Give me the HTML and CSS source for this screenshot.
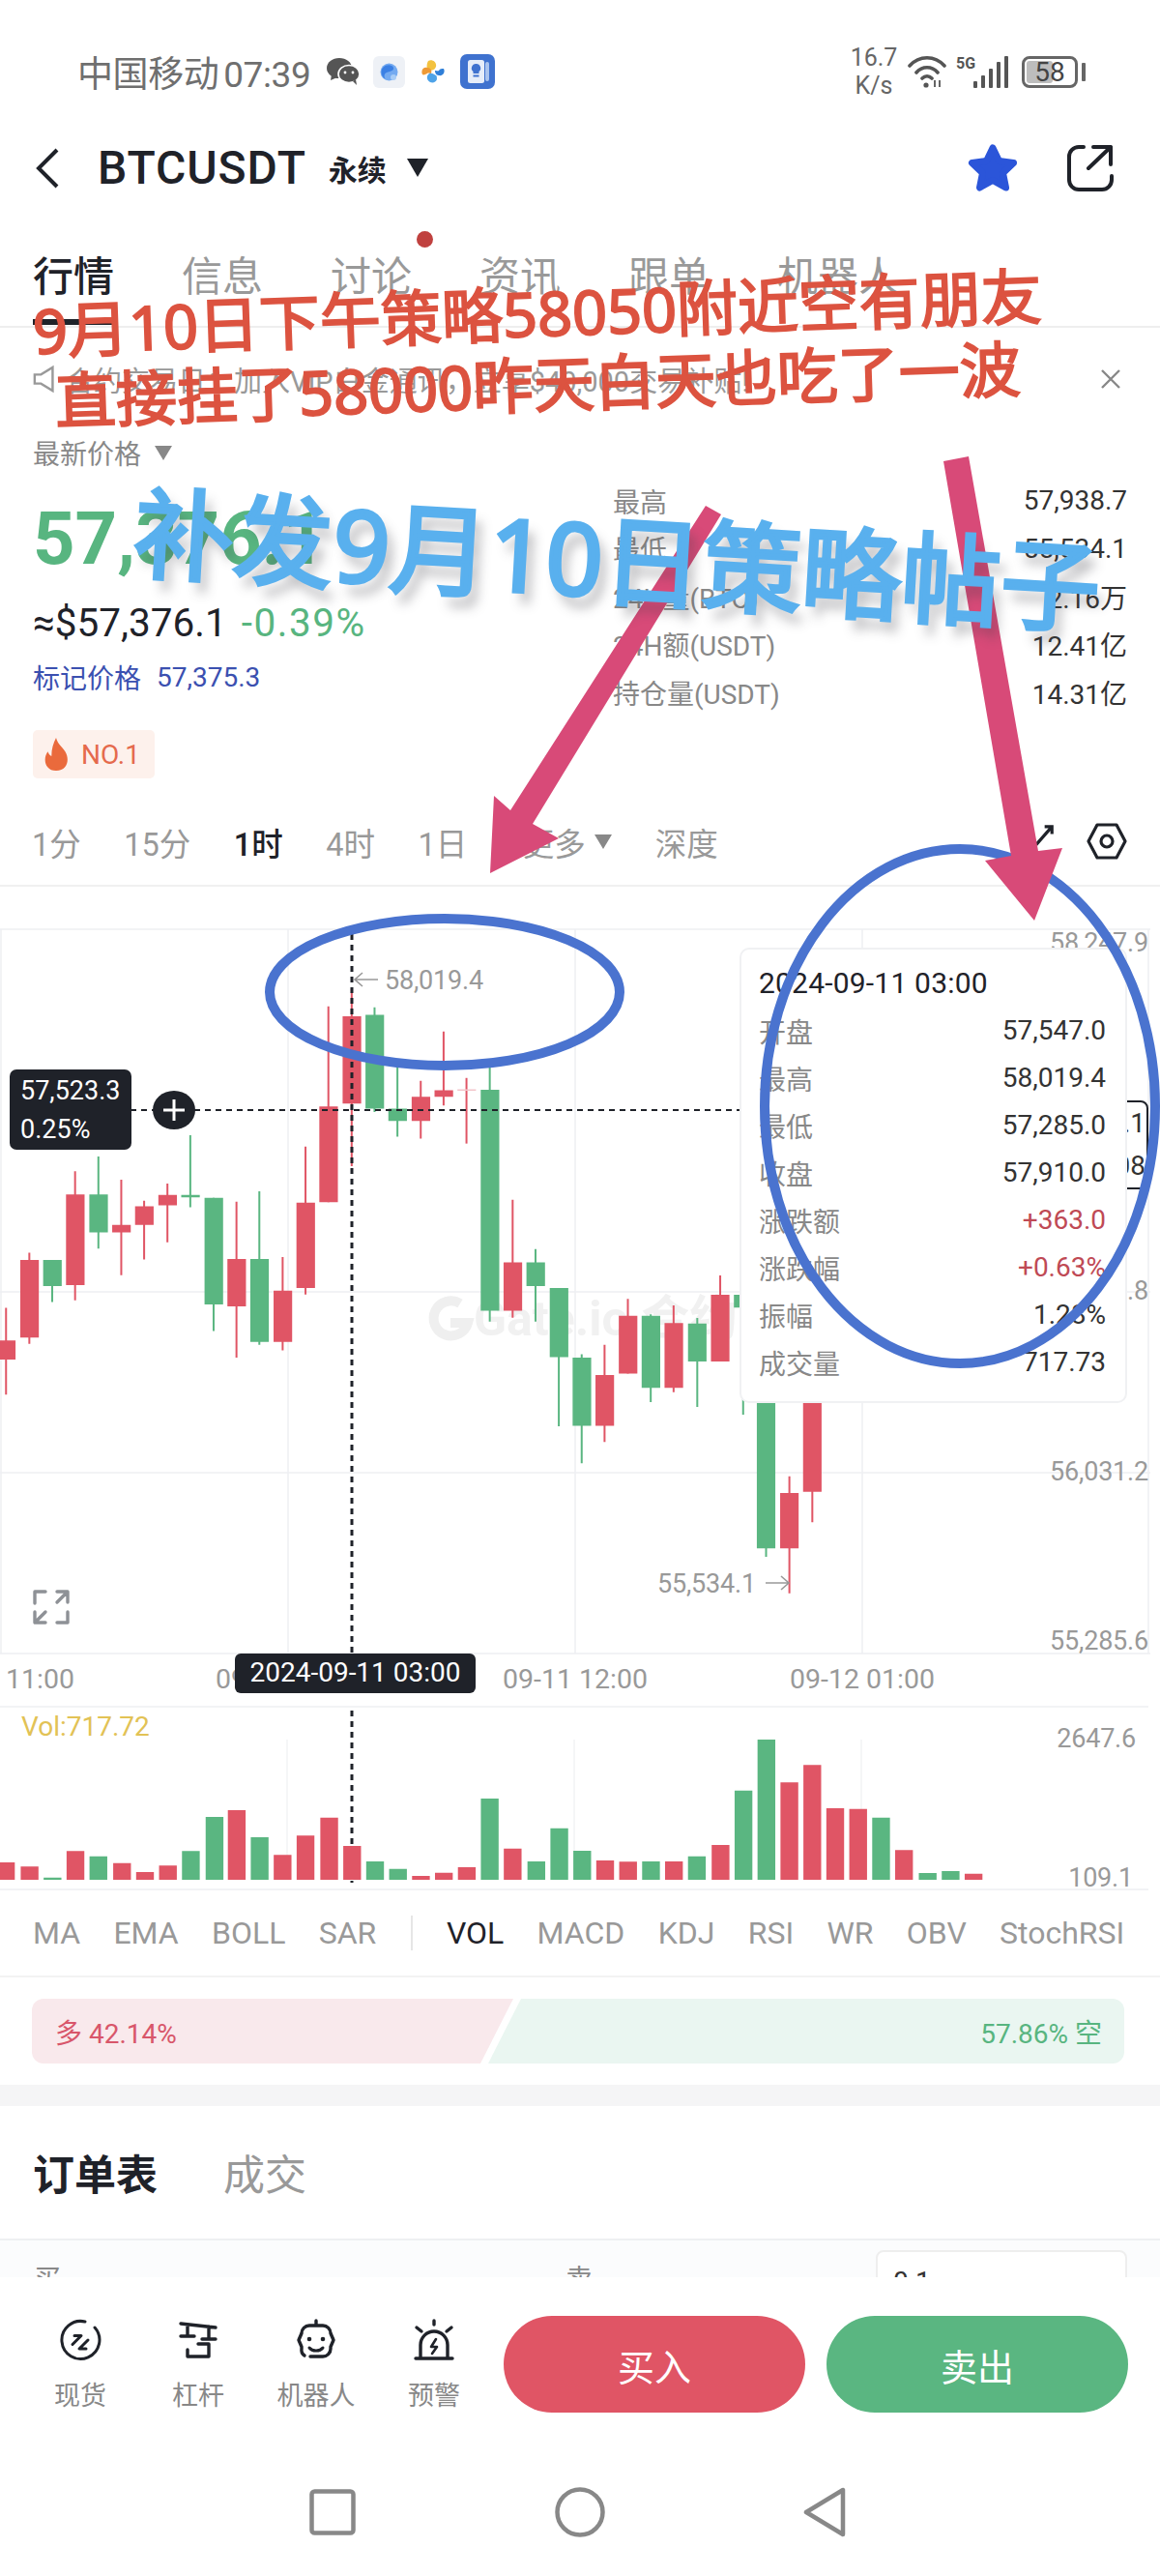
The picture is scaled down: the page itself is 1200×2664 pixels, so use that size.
FILE: index.html
```html
<!DOCTYPE html>
<html lang="zh">
<head>
<meta charset="utf-8">
<title>BTCUSDT</title>
<link rel="stylesheet" href="styles.css">
</head>
<body>
<div class="page">
  <header class="status">
    <div class="status-left">
      <span class="carrier">中国移动 07:39</span>
      <svg class="st-wechat" viewBox="0 0 34 28"><ellipse cx="13" cy="10.5" rx="13" ry="10.5" fill="#555"/><path d="M5 17l-1 6 7-3z" fill="#555"/><ellipse cx="23" cy="16.5" rx="11" ry="9" fill="#555" stroke="#fff" stroke-width="1.6"/><path d="M27 24l4 4-1-6z" fill="#555"/><circle cx="19" cy="15" r="1.4" fill="#fff"/><circle cx="27" cy="15" r="1.4" fill="#fff"/></svg>
      <svg class="st-app" viewBox="0 0 33 33"><rect width="33" height="33" rx="6" fill="#eef1f6"/><circle cx="16.500" cy="16.500" r="9" fill="#74aaf0"/><path d="M10 12c4-4 10-3 11 0s-4 4-7 5-3 5-1 7c-4-2-6-8-3-12z" fill="#3b80e4"/><circle cx="21" cy="22" r="3" fill="#a9cdf6"/></svg>
      <svg class="st-app2" viewBox="0 0 24 24"><path d="M7 1c4-2 9 1 8 6-1 3-4 4-7 4C5 11 5 4 7 1z" fill="#f3c23f"/><path d="M1 15c-2-4 1-8 5-7 4 0 5 3 4 6-1 0-3-1-4 0-2 1-4 2-5 1z" fill="#ee9a35"/><path d="M9 23c-4-2-4-7-1-9 3-1 5 1 7 2 1 0 1 3 1 4-1 3-4 4-7 3z" fill="#4ea3e8"/><path d="M23 9c2 4-1 8-5 7-3 0-4-3-4-5 2 0 3 1 4 0 1-2 3-2 5-2z" fill="#2f7fd8"/></svg>
      <svg class="st-app3" viewBox="0 0 36 36"><rect width="36" height="36" rx="7" fill="#3f72cf"/><rect x="26" y="8" width="4" height="20" rx="2" fill="#a9c3ee"/><rect x="8" y="6" width="17" height="24" rx="2.500" fill="#e6edf9"/><path d="M16.500 10a4.500 4.500 0 0 1 3 8v2h-6v-2a4.500 4.500 0 0 1 3-8z" fill="#3f72cf"/><rect x="13.500" y="21.500" width="6" height="2" fill="#3f72cf"/></svg>
    </div>
    <div class="status-right">
      <div class="speed"><span>16.7</span><span>K/s</span></div>
      <svg class="st-wifi" viewBox="0 0 40 34" fill="none" stroke="#555" stroke-width="3.600" stroke-linecap="round"><path d="M2 11C12 0 28 0 38 11M9 18c6-7 16-7 22 0M15 24c3-3 7-3 10 0"/><circle cx="19" cy="31" r="2.600" fill="#555" stroke="none"/><path d="M28 26v7M33 26v7" stroke-width="1.800" stroke-linecap="butt"/></svg>
      <span class="five-g">5G</span>
      <svg class="st-signal" viewBox="0 0 36 33" fill="#555"><rect x="0" y="26" width="4" height="7" rx="1"/><rect x="8" y="20" width="4" height="13" rx="1"/><rect x="16" y="13" width="4" height="20" rx="1"/><rect x="24" y="6" width="4" height="27" rx="1"/><rect x="32" y="0" width="4" height="33" rx="1"/></svg>
      <div class="battery"><div class="batt-fill"></div><span class="batt-num">58</span></div>
      <div class="batt-cap"></div>
    </div>
  </header>

  <div class="titlebar">
    <svg class="ic-back" viewBox="0 0 26 42" fill="none" stroke="#1f2229" stroke-width="4"><path d="M23 2L4 21l19 19"/></svg>
    <span class="symbol">BTCUSDT</span>
    <span class="perp">永续</span>
    <span class="caret"></span>
    <div class="title-actions">
      <svg class="ic-star" viewBox="0 0 52 51"><path d="M26 5l6.500 13.500 15 2-11 10.500 3 15L26 38.500 12.500 46l3-15L4.500 20.500l15-2z" fill="#2b55d9" stroke="#2b55d9" stroke-width="7" stroke-linejoin="round"/></svg>
      <svg class="ic-share" viewBox="0 0 48 48" fill="none" stroke="#1f2229" stroke-width="4" stroke-linecap="round" stroke-linejoin="round"><path d="M17 2H12A10 10 0 0 0 2 12V36a10 10 0 0 0 10 10H36a10 10 0 0 0 10-10V32M22 24L45 2M27 2H45V20"/></svg>
    </div>
  </div>

  <nav class="tabs">
    <span class="tab tab-on">行情</span>
    <span class="tab">信息</span>
    <span class="tab">讨论</span>
    <span class="tab">资讯</span>
    <span class="tab">跟单</span>
    <span class="tab">机器人</span>
  </nav>

  <div class="notice">
    <svg class="ic-speaker" viewBox="0 0 28 32" fill="none" stroke="#999" stroke-width="2.600"><path d="M2 11h7l13-8v26l-13-8H2z"/></svg>
    <span class="notice-text">合约交易日：加入VIP白金通讯，立享$40,000交易补贴!</span>
    <svg class="ic-close" viewBox="0 0 22 22" stroke="#888" stroke-width="2.400"><path d="M2 2l18 18M20 2L2 20"/></svg>
  </div>

  <section class="market">
    <div class="market-left">
      <div class="latest"><span>最新价格</span><span class="caret caret-sm"></span></div>
      <div class="price">57,376.1</div>
      <div class="usd"><span>≈$57,376.1</span><span class="usd-pct">-0.39%</span></div>
      <div class="mark"><span>标记价格</span><span>57,375.3</span></div>
      <div class="badge">
        <svg class="ic-flame" viewBox="0 0 28 36"><path d="M14 0c2 7 6 9 10 15 5 8 3 21-10 21C2 36-1 23 5 15c1 3 2 4 4 5 0-8 2-14 5-20z" fill="#ea6a3c"/></svg>
        <span>NO.1</span>
      </div>
    </div>
    <dl class="stats">
      <div class="stat"><dt>最高</dt><dd>57,938.7</dd></div>
      <div class="stat"><dt>最低</dt><dd>55,534.1</dd></div>
      <div class="stat"><dt>24H量(BTC)</dt><dd>2.16万</dd></div>
      <div class="stat"><dt>24H额(USDT)</dt><dd>12.41亿</dd></div>
      <div class="stat"><dt>持仓量(USDT)</dt><dd>14.31亿</dd></div>
    </dl>
  </section>

  <div class="intervals">
    <span>1分</span><span>15分</span><span class="on">1时</span><span>4时</span><span>1日</span>
    <span class="more">更多</span><span class="caret caret-sm more-caret"></span>
    <span>深度</span>
    <svg class="ic-draw" viewBox="0 0 36 40" fill="none" stroke="#1f2229" stroke-width="3.400"><path d="M4 36L32 4M24 4h8v8"/></svg>
    <svg class="ic-hex" viewBox="0 0 42 38" fill="none" stroke="#1f2229" stroke-width="3.200"><path d="M11 2h20l9 17-9 17H11L2 19z" stroke-linejoin="round"/><circle cx="21" cy="19" r="6"/></svg>
  </div>

  <section class="chart">
    <svg class="chart-svg" viewBox="0 916 1200 1038">
      <g class="grid">
        <path d="M0 960H1190M0 1335H1190M0 1522H1190M0 1709H1190"/>
        <path d="M1 960V1709M298 960V1709M595 960V1709M892 960V1709M1188 960V1709"/>
        <path d="M0 1764H1188M0 1953H1188"/>
        <path class="grid-faint" d="M297 1798V1943M594 1798V1943M891 1798V1943"/>
      </g>
      <g class="wm">
        <path class="wm-logo" d="M476 1347a18 18 0 1 0 8 20h-18" />
        <text class="wm-text" x="490" y="1380">Gate.io 合约</text>
      </g>
      <g transform="translate(0,950) scale(.4464,.5102)">
        <path class="wick-r" d="M14 787V963M68 675V860M174 510V772M281 527V721M334 570V689M388 535V654M548 572V888M655 684V873M708 460V760M761 176V573M815 140V500M975 327V444M1028 227V377M1188 568V807M1401 862V1059M1455 769V920M1561 782V958"/>
        <path class="wick-l" d="M1081 321V454"/>
        <path class="wick-g" d="M121 690V775M228 480V667M441 437V583M495 564V834M601 551V862M868 178V390M921 300V440M1135 300V815M1241 668V815M1295 747V1027M1348 881V1102M1508 800V978"/>
        <path class="body-r" d="M-7 853h43V892h-43zM47 690h43V847h-43zM153 557h43V741h-43zM260 619h43V634h-43zM313 581h43V619h-43zM367 558h43V579h-43zM527 688h43V784h-43zM634 752h43V856h-43zM687 574h43V747h-43zM740 379h43V573h-43zM794 196h43V373h-43zM954 359h43V408h-43zM1007 346h43V359h-43zM1167 695h43V793h-43zM1380 923h43V1026h-43zM1434 803h43V920h-43zM1540 818h43V949h-43z"/>
        <path class="body-l" d="M1060 344h43V347h-43z"/>
        <path class="body-g" d="M100 690h43V743h-43zM207 557h43V634h-43zM420 558h43V563h-43zM474 564h43V780h-43zM580 688h43V856h-43zM847 193h43V383h-43zM900 383h43V408h-43zM1114 345h43V793h-43zM1220 695h43V743h-43zM1274 747h43V887h-43zM1327 888h43V1026h-43zM1487 803h43V949h-43z"/>
      </g>
      <g transform="translate(600,850) scale(.3827,.5741)">
        <path class="wick-r" d="M379 815V970M566 1177V1388M628 1000V1260"/>
        <path class="wick-g" d="M317 892V1052M441 850V1066M503 1000V1322"/>
        <path class="body-r" d="M354 850h50V970h-50zM541 1207h50V1307h-50zM603 1000h50V1205h-50z"/>
        <path class="body-g" d="M292 902h50V970h-50zM416 850h50V873h-50zM478 1000h50V1307h-50z"/>
      </g>
      <g class="cross">
        <path d="M135 1147H765"/>
        <path class="cross-v" d="M364 965V1709M364 1768V1946"/>
      </g>
      <text class="axis hl" x="398" y="1022">58,019.4</text>
      <path class="hl-arrow" d="M391 1012H367M375 1005l-8 7 8 7"/>
      <text class="axis hl" x="680" y="1646">55,534.1</text>
      <path class="hl-arrow" d="M792 1636H816M808 1629l8 7-8 7"/>
      <g class="axis">
        <text class="xlab" x="6" y="1745">11:00</text>
        <text class="xlab" x="223" y="1745">09-11 00:00</text>
        <text class="xlab" x="520" y="1745">09-11 12:00</text>
        <text class="xlab" x="817" y="1745">09-12 01:00</text>
        <text class="end" x="1188" y="983">58,247.9</text>
        <text class="end" x="1188" y="1343">56,778.8</text>
        <text class="end" x="1188" y="1530">56,031.2</text>
        <text class="end" x="1188" y="1705">55,285.6</text>
        <text class="end" x="1175" y="1806">2647.6</text>
        <text class="end" x="1172" y="1950">109.1</text>
      </g>
      <text class="vol-label" x="22" y="1794">Vol:717.72</text>
      <g transform="translate(0,1750) scale(.7653,.33333)">
        <path class="body-r" d="M-4 525h24V579h-24zM28 538h24V579h-24zM90 490h24V579h-24zM153 527h24V579h-24zM184 555h24V579h-24zM215 535h24V579h-24zM308 363h24V579h-24zM370 502h24V579h-24zM401 442h24V579h-24zM433 386h24V579h-24zM464 474h24V579h-24zM557 567h24V579h-24zM588 557h24V579h-24zM619 540h24V579h-24zM681 482h24V579h-24zM806 519h24V579h-24zM837 523h24V579h-24zM899 522h24V579h-24zM962 471h24V579h-24zM1055 277h24V579h-24zM1086 223h24V579h-24zM1117 357h24V579h-24zM1148 359h24V579h-24zM1210 487h24V579h-24zM1304 560h24V579h-24z"/>
        <path class="body-g" d="M59 572h24V579h-24zM121 506h24V579h-24zM246 490h24V579h-24zM278 384h24V579h-24zM339 447h24V579h-24zM495 522h24V579h-24zM526 545h24V579h-24zM650 327h24V579h-24zM713 522h24V579h-24zM744 419h24V579h-24zM775 489h24V579h-24zM868 522h24V579h-24zM930 506h24V579h-24zM993 302h24V579h-24zM1024 144h24V579h-24zM1179 386h24V579h-24zM1242 558h24V579h-24zM1273 552h24V579h-24z"/>
      </g>
      <path class="expand" d="M36 1657v-12h11M59 1645h11v11M70 1645l-11 11M47 1677h-11v-11M36 1677l11-11M70 1666v11h-11"/>
    </svg>

    <div class="price-tag"><span>57,523.3</span><span>0.25%</span></div>
    <svg class="plus" viewBox="0 0 44 40"><ellipse cx="22" cy="20" rx="22" ry="20" fill="#1f2229"/><path d="M22 9v22M11 20h22" stroke="#fff" stroke-width="3"/></svg>
    <div class="time-tag">2024-09-11 03:00</div>
    <div class="last-tag"><span>57,910.1</span><span>00:20:08</span></div>

    <div class="tooltip">
      <div class="tip-row tip-date">2024-09-11 03:00</div>
      <div class="tip-row"><span>开盘</span><b>57,547.0</b></div>
      <div class="tip-row"><span>最高</span><b>58,019.4</b></div>
      <div class="tip-row"><span>最低</span><b>57,285.0</b></div>
      <div class="tip-row"><span>收盘</span><b>57,910.0</b></div>
      <div class="tip-row"><span>涨跌额</span><b class="red">+363.0</b></div>
      <div class="tip-row"><span>涨跌幅</span><b class="red">+0.63%</b></div>
      <div class="tip-row"><span>振幅</span><b>1.28%</b></div>
      <div class="tip-row"><span>成交量</span><b>717.73</b></div>
    </div>
  </section>

  <div class="indicators">
    <span>MA</span><span>EMA</span><span>BOLL</span><span>SAR</span>
    <i class="sep"></i>
    <span class="on">VOL</span><span>MACD</span><span>KDJ</span><span>RSI</span><span>WR</span><span>OBV</span><span>StochRSI</span>
  </div>

  <div class="ratio-wrap">
    <div class="ratio">
      <div class="ratio-long"><span>多 42.14%</span></div>
      <div class="ratio-short"><span>57.86% 空</span></div>
    </div>
  </div>

  <div class="band"></div>

  <div class="order-head">
    <span class="order-on">订单表</span>
    <span class="order-off">成交</span>
  </div>

  <div class="order-peek">
    <span class="peek-a">买</span>
    <span class="peek-b">卖</span>
    <div class="peek-input">0.1</div>
  </div>

  <div class="actionbar">
    <div class="tools">
      <div class="tool">
        <svg viewBox="0 0 44 44" fill="none" stroke="#1f2229" stroke-linecap="round" stroke-linejoin="round"><path d="M37 9A19.500 19.500 0 1 1 27 3" stroke-width="3"/><path d="M16 17.500h7L14 26.500M30 22l-9 9h7" stroke-width="3"/></svg>
        <span>现货</span>
      </div>
      <div class="tool">
        <svg viewBox="0 0 44 44" fill="none" stroke="#1f2229" stroke-width="3.400" stroke-linecap="round" stroke-linejoin="round"><path d="M4 5L40 9M11 6V18M4 18H18M33 8V20M26 21H40M22 26H33V39H11V32"/></svg>
        <span>杠杆</span>
      </div>
      <div class="tool">
        <svg viewBox="0 0 44 44" fill="none" stroke="#1f2229" stroke-width="3.400" stroke-linecap="round" stroke-linejoin="round"><path d="M22 2v5M15 7h14a8 8 0 0 1 8 8l3 7-3 7v2a8 8 0 0 1-8 8H16M10 38a7 7 0 0 1-3-7v-2l-3-7 3-7a8 8 0 0 1 8-8"/><path d="M15 30c3 4 11 4 14 0" stroke-width="3"/><circle cx="15" cy="21" r="2.300" fill="#1f2229" stroke="none"/><circle cx="29" cy="21" r="2.300" fill="#1f2229" stroke="none"/></svg>
        <span>机器人</span>
      </div>
      <div class="tool">
        <svg viewBox="0 0 44 44" fill="none" stroke="#1f2229" stroke-width="3.400" stroke-linecap="round" stroke-linejoin="round"><path d="M8 41V27a14 14 0 0 1 28 0v14M3 41h38M22 2v4M4 9l5 4M40 9l-5 4"/><path d="M24 21l-5 8h6l-5 7" stroke-width="2.600"/></svg>
        <span>预警</span>
      </div>
    </div>
    <div class="trade">
      <button class="btn btn-buy">买入</button>
      <button class="btn btn-sell">卖出</button>
    </div>
  </div>

  <div class="navbar">
    <svg class="nav-sq" viewBox="0 0 48 48" fill="none" stroke="#888" stroke-width="4.500"><rect x="2.500" y="2.500" width="43" height="43" rx="3"/></svg>
    <svg class="nav-ci" viewBox="0 0 52 52" fill="none" stroke="#888" stroke-width="4.500"><circle cx="26" cy="26" r="23.500"/></svg>
    <svg class="nav-tr" viewBox="0 0 44 52" fill="none" stroke="#888" stroke-width="4.500" stroke-linejoin="round"><path d="M41 3v46L3 26z"/></svg>
  </div>

  <svg class="marks" viewBox="0 0 1200 2664">
    <ellipse class="ring" cx="460" cy="1026" rx="181" ry="76"/>
    <ellipse class="ring" cx="993" cy="1144" rx="202" ry="266"/>
    <path class="arrow" d="M730 523L746 532L551 852L578 867L507 903L511 823L528 838Z"/>
    <path class="arrow" d="M976 477L1002 472L1074 880L1099 877L1070 952L1019 890L1046 885Z"/>
  </svg>
  <div class="note note-red note-1">9月10日下午策略58050附近空有朋友</div>
  <div class="note note-red note-2">直接挂了58000昨天白天也吃了一波</div>
  <div class="note note-blue">补发9月10日策略帖子</div>
  <span class="red-dot"></span>
</div>
</body>
</html>
```

FILE: styles.css
```css
* { box-sizing: border-box; }
html, body { margin: 0; padding: 0; background: #fff; }
body { font-family: Roboto, "Noto Sans CJK SC", "Liberation Sans", sans-serif; color: #1f2229; }
.page { position: relative; width: 1200px; height: 2664px; overflow: hidden; background: #fff; }

.status { height: 120px; display: flex; justify-content: space-between; align-items: center; padding: 28px 77px 0 80px; color: #6f6f6f; }
.status-left { display: flex; align-items: center; }
.carrier { font-size: 37px; letter-spacing: -.4px; word-spacing: -4px; white-space: nowrap; }
.st-wechat { width: 34px; height: 28px; margin-left: 17px; }
.st-app { width: 33px; height: 33px; margin-left: 14px; }
.st-app2 { width: 24px; height: 24px; margin-left: 17px; }
.st-app3 { width: 36px; height: 36px; margin-left: 16px; }
.status-right { display: flex; align-items: center; }
.speed { display: flex; flex-direction: column; align-items: center; font-size: 25px; line-height: 29px; width: 50px; color: #666; }
.st-wifi { width: 40px; height: 34px; margin-left: 10px; }
.five-g { font-size: 16px; font-weight: 700; margin: -18px 0 0 10px; color: #555; width: 18px; }
.st-signal { width: 36px; height: 33px; margin-left: 0; }
.battery { position: relative; width: 58px; height: 33px; margin-left: 14px; border: 3px solid #666; border-radius: 8px; padding: 2px; }
.batt-fill { width: 56%; height: 100%; background: #bdbdbd; border-radius: 3px; }
.batt-num { position: absolute; inset: 0; display: flex; align-items: center; justify-content: center; font-size: 28px; color: #444; }
.batt-cap { width: 4px; height: 19px; background: #666; margin-left: 4px; border-radius: 1px; }

.titlebar { height: 116px; display: flex; align-items: center; padding: 0 48px 9px 36px; }
.ic-back { width: 26px; height: 42px; }
.symbol { font-size: 48px; font-weight: 500; margin-left: 39px; letter-spacing: .9px; color: #1f2229; }
.perp { font-size: 30px; font-weight: 700; margin-left: 23px; }
.caret { display: inline-block; width: 0; height: 0; border-style: solid; border-width: 19px 11px 0; border-color: #1f2229 transparent transparent; margin-left: 21px; }
.title-actions { margin-left: auto; display: flex; align-items: center; gap: 51px; }
.ic-star { width: 52px; height: 51px; }
.ic-share { width: 48px; height: 48px; }

.tabs { height: 103px; display: flex; gap: 70px; padding: 26px 0 0 34px; border-bottom: 2px solid #eee; position: relative; }
.tab { font-size: 42px; line-height: 50px; color: #999; height: 50px; }
.tab-on { color: #1f2229; font-weight: 500; position: relative; }
.tab-on::after { content: ""; position: absolute; left: 0; right: 2px; top: 68px; height: 6px; background: #1f2229; }

.notice { height: 101px; display: flex; align-items: center; padding: 4px 40px 0 34px; }
.ic-speaker { width: 26px; height: 34px; }
.notice-text { font-size: 29px; color: #999; margin-left: 8px; white-space: nowrap; }
.ic-close { width: 22px; height: 22px; margin-left: auto; }

.market { height: 390px; display: flex; justify-content: space-between; padding: 10px 34px 0 34px; }
.market-left { display: flex; flex-direction: column; align-items: flex-start; }
.latest { height: 36px; display: flex; align-items: center; font-size: 28px; color: #888; }
.caret-sm { border-width: 15px 9px 0; border-color: #888 transparent transparent; margin-left: 14px; }
.price { height: 94px; margin-top: 24px; line-height: 94px; font-size: 76px; font-weight: 700; color: #58b580; }
.usd { height: 40px; margin-top: 20px; display: flex; align-items: center; gap: 15px; font-size: 40.5px; }
.usd-pct { color: #58b580; letter-spacing: 1.5px; }
.mark { height: 32px; margin-top: 20px; display: flex; align-items: center; gap: 16px; font-size: 28px; color: #3b50b0; }
.badge { height: 50px; margin-top: 39px; width: 126px; padding: 0 0 0 10px; display: flex; align-items: center; gap: 12px; background: #fdf1ec; border-radius: 5px; font-size: 28px; color: #e56a4c; }
.ic-flame { width: 28px; height: 34px; }
.stats { width: 532px; margin: 43px 0 0; }
.stat { height: 49.5px; display: flex; justify-content: space-between; align-items: center; font-size: 28px; }
.stat dt { color: #888; }
.stat dd { margin: 0; color: #333; }

.intervals { height: 87px; display: flex; align-items: center; gap: 44.5px; padding: 0 34px 5px 33px; font-size: 32.5px; color: #999; border-bottom: 2px solid #f0f0f0; }
.intervals .on { color: #1f2229; font-weight: 500; }
.more { margin-left: 13px; }
.more-caret { margin-left: -35px; }
.ic-draw { width: 34px; height: 38px; margin-left: auto; }
.ic-hex { width: 42px; height: 38px; margin-left: -12px; }

.chart { position: relative; height: 1038px; }
.chart-svg { display: block; width: 1200px; height: 1038px; }
.grid path { fill: none; stroke: #eef0f2; stroke-width: 1.5; }
.grid .grid-faint { stroke: #f2f3f5; }
.wm-logo { fill: none; stroke: #efefef; stroke-width: 10; }
.wm-text { font-size: 50px; font-weight: 700; fill: #f1f1f1; }
.wick-r, .wick-g, .wick-l { fill: none; stroke-width: 2; vector-effect: non-scaling-stroke; }
.wick-r { stroke: #e05565; }
.wick-g { stroke: #5ab681; }
.wick-l { stroke: #e05565; }
.body-r { fill: #e05565; }
.body-g { fill: #5ab681; }
.body-l { fill: #f3c4ca; }
.cross path { fill: none; stroke: #1f2229; stroke-width: 2; stroke-dasharray: 6 5; }
.cross .cross-v { stroke-width: 3; stroke-dasharray: 6 5; }
.axis text, text.axis { font-size: 27px; fill: #999; letter-spacing: -.2px; }
.axis text.xlab { font-size: 28.5px; letter-spacing: 0; }
.axis .end { text-anchor: end; }
.hl-arrow { fill: none; stroke: #999; stroke-width: 1.6; }
.vol-label { font-size: 28px; fill: #e2c255; }
.expand { fill: none; stroke: #8e9196; stroke-width: 3.4; stroke-linecap: round; stroke-linejoin: round; }

.price-tag { position: absolute; left: 10px; top: 189px; width: 126px; height: 83px; background: #1f2229; border-radius: 7px; color: #fff; font-size: 27px; line-height: 40px; padding: 2px 11px; display: flex; flex-direction: column; }
.plus { position: absolute; left: 158px; top: 211px; width: 44px; height: 40px; }
.time-tag { position: absolute; left: 243px; top: 793px; width: 249px; height: 41px; background: #1f2229; border-radius: 6px; color: #fff; font-size: 28px; line-height: 40px; text-align: center; }
.last-tag { position: absolute; left: 1000px; top: 221px; width: 188px; height: 92px; background: #fff; border: 2px solid #1f2229; border-radius: 0 8px 8px 0; font-size: 28px; line-height: 44px; color: #333; padding: 0 1px 0 0; display: flex; flex-direction: column; align-items: flex-end; justify-content: center; }
.tooltip { position: absolute; left: 765px; top: 63px; width: 401px; height: 471px; background: #fff; border: 2px solid #f0f1f3; border-radius: 10px; padding: 10px 20px 0 18px; font-size: 28px; }
.tip-row { height: 49px; display: flex; justify-content: space-between; align-items: center; color: #888; }
.tip-row b { font-weight: 400; color: #333; }
.tip-row b.red { color: #bf4a55; }
.tip-date { color: #1f2229; font-size: 30px; letter-spacing: .2px; }

.indicators { height: 90px; display: flex; align-items: center; gap: 34.3px; padding: 0 34px; font-size: 32px; color: #999; border-bottom: 2px solid #f3f3f3; white-space: nowrap; }
.indicators .on { color: #1f2229; }
.sep { width: 2px; height: 36px; background: #e6e6e6; margin: 0 1px; }

.ratio-wrap { height: 111px; padding: 22px 33px 0; }
.ratio { height: 67px; display: flex; position: relative; font-size: 28px; }
.ratio-long { width: 498px; height: 67px; background: #f9e9ec; clip-path: polygon(0 0, 100% 0, 464px 100%, 0 100%); border-radius: 12px 0 0 12px; color: #d8566a; display: flex; align-items: center; padding-left: 24px; }
.ratio-short { width: 666px; height: 67px; margin-left: -34px; background: #eaf6f1; clip-path: polygon(42px 0, 100% 0, 100% 100%, 8px 100%); border-radius: 0 12px 12px 0; color: #58b580; display: flex; align-items: center; justify-content: flex-end; padding-right: 23px; }

.band { height: 22px; background: #f5f5f6; }
.order-head { height: 139px; display: flex; align-items: center; gap: 68px; padding: 0 0 2px 34px; border-bottom: 2px solid #eef0f2; font-size: 43px; }
.order-on { font-weight: 700; color: #1f2229; }
.order-off { color: #999; }
.order-peek { height: 38px; overflow: hidden; background: #fbfcfd; display: flex; padding: 10px 34px 0 35px; font-size: 28px; color: #888; position: relative; }
.peek-a { margin-top: 8px; }
.peek-b { margin: 8px 0 0 522px; }
.peek-input { margin: 0 0 0 auto; width: 260px; height: 60px; border: 2px solid #eee; border-radius: 8px; padding: 14px 16px; color: #333; background: #fff; }

.actionbar { height: 176px; display: flex; align-items: flex-start; padding: 40px 33px 0 22px; background: #fff; }
.tools { display: flex; width: 490px; }
.tool { width: 122px; display: flex; flex-direction: column; align-items: center; font-size: 27px; color: #888; }
.tool svg { width: 44px; height: 44px; margin: 3px 0 14px; }
.trade { display: flex; gap: 22px; margin-left: auto; }
.btn { width: 312px; height: 100px; border: 0; border-radius: 50px; font: 400 38px "Noto Sans CJK SC", sans-serif; color: #fff; }
.btn-buy { background: #e05565; }
.btn-sell { background: #5ab681; }

.navbar { height: 134px; display: flex; align-items: center; padding: 0 325px 0 320px; justify-content: space-between; }
.nav-sq { width: 48px; height: 48px; }
.nav-ci { width: 52px; height: 52px; }
.nav-tr { width: 44px; height: 52px; }

.marks { position: absolute; left: 0; top: 0; width: 1200px; height: 2664px; pointer-events: none; }
.ring { fill: none; stroke: #4a73cf; stroke-width: 10; }
.arrow { fill: #d84a78; }
.note { position: absolute; white-space: nowrap; font-family: "Noto Sans", "Noto Sans CJK SC", sans-serif; transform-origin: 0 50%; line-height: 1; }
.note-red { color: #dc5340; font-size: 63px; -webkit-text-stroke: 2px #dc5340; }
.note-1 { left: 34px; top: 310px; transform: rotate(-2deg); }
.note-2 { left: 57px; top: 382px; transform: rotate(-1.9deg); }
.note-blue { left: 139px; top: 498px; color: #59b0ee; font-size: 103px; transform: rotate(3.3deg); text-shadow: 8px 12px 12px rgba(60, 60, 70, .35); -webkit-text-stroke: 4px #59b0ee; }
.red-dot { position: absolute; left: 431px; top: 239px; width: 17px; height: 17px; border-radius: 50%; background: #c0413f; }
```
